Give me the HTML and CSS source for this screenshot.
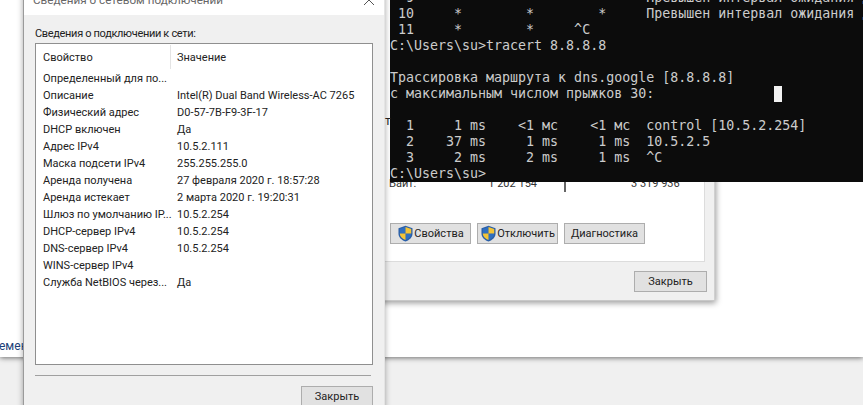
FILE: index.html
```html
<!DOCTYPE html>
<html lang="ru">
<head>
<meta charset="utf-8">
<title>Сведения о сетевом подключении</title>
<link rel="stylesheet" href="styles.css">
</head>
<body>
<div class="desktop">
  <div class="main-window"><span class="main-link">емен</span></div>

  <section class="status-dialog">
    <span class="stray">т</span>
    <div class="status-panel">
      <div class="stat-row">
        <span class="stat-label">Байт:</span>
        <span class="stat-sent">1 202 154</span>
        <span class="stat-line"></span>
        <span class="stat-recv">3 319 936</span>
      </div>
      <div class="status-actions">
        <button class="btn btn-action"><svg class="shield" viewBox="0 0 16 16"><path d="M8 .6 14.600 3v5c0 3.600-2.800 6.200-6.600 7.500C4.200 14.200 1.400 11.600 1.400 8V3z" fill="#2a5fa8"/><path d="M8 1.800V8H2.600V3.700zM8 8h5.400c-.1 2.900-2.400 5-5.400 6.200z" fill="#2f6fc0"/><path d="M8 1.800 13.400 3.700V8H8zM8 8v6.200C5 13 2.700 10.900 2.600 8z" fill="#f3c437"/></svg><span>Свойства</span></button>
        <button class="btn btn-action"><svg class="shield" viewBox="0 0 16 16"><path d="M8 .6 14.600 3v5c0 3.600-2.800 6.200-6.600 7.500C4.200 14.200 1.400 11.600 1.400 8V3z" fill="#2a5fa8"/><path d="M8 1.800V8H2.600V3.700zM8 8h5.400c-.1 2.900-2.400 5-5.400 6.200z" fill="#2f6fc0"/><path d="M8 1.800 13.400 3.700V8H8zM8 8v6.200C5 13 2.700 10.900 2.600 8z" fill="#f3c437"/></svg><span>Отключить</span></button>
        <button class="btn btn-action btn-plain">Диагностика</button>
      </div>
    </div>
    <div class="status-footer"><button class="btn btn-close">Закрыть</button></div>
  </section>

  <section class="details-dialog">
    <header class="titlebar">
      <span class="title-text">Сведения о сетевом подключении</span>
      <svg class="close-x" viewBox="0 0 12 12"><path d="M1 1 11 11M11 1 1 11" stroke="#555" stroke-width="1" fill="none"/></svg>
    </header>
    <div class="details-body">
      <div class="list-caption">Сведения о подключении к сети:</div>
      <div class="list">
        <div class="list-head"><span class="head-prop">Свойство</span><span class="head-val">Значение</span></div>
        <div class="row"><span>Определенный для по...</span><span></span></div>
        <div class="row"><span>Описание</span><span>Intel(R) Dual Band Wireless-AC 7265</span></div>
        <div class="row"><span>Физический адрес</span><span>D0-57-7B-F9-3F-17</span></div>
        <div class="row"><span>DHCP включен</span><span>Да</span></div>
        <div class="row"><span>Адрес IPv4</span><span>10.5.2.111</span></div>
        <div class="row"><span>Маска подсети IPv4</span><span>255.255.255.0</span></div>
        <div class="row"><span>Аренда получена</span><span>27 февраля 2020 г. 18:57:28</span></div>
        <div class="row"><span>Аренда истекает</span><span>2 марта 2020 г. 19:20:31</span></div>
        <div class="row"><span>Шлюз по умолчанию IP...</span><span>10.5.2.254</span></div>
        <div class="row"><span>DHCP-сервер IPv4</span><span>10.5.2.254</span></div>
        <div class="row"><span>DNS-сервер IPv4</span><span>10.5.2.254</span></div>
        <div class="row"><span>WINS-сервер IPv4</span><span></span></div>
        <div class="row"><span>Служба NetBIOS через...</span><span>Да</span></div>
      </div>
      <div class="separator"></div>
      <div class="details-footer"><button class="btn btn-close">Закрыть</button></div>
    </div>
  </section>

  <section class="console">
<pre class="console-text">  9     *        *        *     Превышен интервал ожидания для запроса.
 10     *        *        *     Превышен интервал ожидания для запроса.
 11     *        *     ^C
C:\Users\su&gt;tracert 8.8.8.8

Трассировка маршрута к dns.google [8.8.8.8]
с максимальным числом прыжков 30:

  1     1 ms    &lt;1 мс    &lt;1 мс  control [10.5.2.254]
  2    37 ms     1 ms     1 ms  10.5.2.5
  3     2 ms     2 ms     1 ms  ^C
C:\Users\su&gt;</pre>
    <span class="cursor"></span>
  </section>
</div>
</body>
</html>
```
FILE: styles.css
```css
* { box-sizing: border-box; }

html, body {
  margin: 0;
  padding: 0;
  height: 100%;
  overflow: hidden;
}

body {
  font-family: Roboto, "Open Sans", sans-serif;
  font-size: 11px;
  color: #222;
}

.desktop {
  position: relative;
  width: 863px;
  height: 405px;
  overflow: hidden;
  background: #f0f0f0;
}

/* Back window */
.main-window {
  position: absolute;
  left: 0;
  top: 0;
  width: 863px;
  height: 357px;
  background: #fff;
  box-shadow: 0 1px 5px rgba(0, 0, 0, .55);
}

.main-link {
  position: absolute;
  left: -1px;
  top: 339px;
  font-size: 12px;
  color: #1c3f78;
}

/* Connection status dialog */
.status-dialog {
  position: absolute;
  left: 340px;
  top: 0;
  width: 375px;
  height: 301px;
  display: flex;
  flex-direction: column;
  background: #f0f0f0;
  border-right: 1px solid #d0d0d0;
  border-bottom: 1px solid #c8c8c8;
  box-shadow: 1px 2px 6px rgba(0, 0, 0, .4);
}

.stray {
  position: absolute;
  left: 45px;
  top: 114px;
  z-index: 1;
  font-size: 12px;
}

.status-panel {
  height: 262px;
  margin-right: 9px;
  padding: 0 0 17px 50px;
  display: flex;
  flex-direction: column;
  justify-content: flex-end;
  background: #fff;
  border-right: 1px solid #dcdcdc;
  border-bottom: 1px solid #dcdcdc;
}

.stat-row {
  display: grid;
  grid-template-columns: 147px 28px 1px 64px 46px;
  height: 18px;
  margin-bottom: 31px;
  align-items: center;
  color: #333;
}

.stat-sent { grid-column: 1; text-align: right; white-space: nowrap; }
.stat-line { grid-column: 3; align-self: stretch; width: 2px; margin-left: -1px; background: #666; }
.stat-recv { grid-column: 5 / 6; margin-left: 1px; text-align: right; white-space: nowrap; }
.stat-label { position: absolute; left: 49px; }

.status-actions {
  display: flex;
  gap: 6px;
}

.status-footer {
  flex: 1;
  display: flex;
  justify-content: flex-end;
  align-items: flex-start;
  padding: 9px 7px 0 0;
}

.btn {
  font-family: inherit;
  font-size: 11px;
  color: #222;
  background: #e1e1e1;
  border: 1px solid #adadad;
  padding: 0;
  display: flex;
  align-items: center;
  justify-content: center;
}

.btn-action {
  width: 81px;
  height: 21px;
  gap: 0;
}

.shield {
  width: 17px;
  height: 17px;
  flex: none;
}

.btn-close {
  width: 73px;
  height: 21px;
}

/* Details dialog */
.details-dialog {
  position: absolute;
  left: 23px;
  top: -20px;
  width: 362px;
  height: 440px;
  background: #f0f0f0;
  border-left: 1px solid #9a9a9a;
  border-right: 1px solid #e4e4e4;
  box-shadow: 0 0 6px rgba(0, 0, 0, .35);
}

.titlebar {
  height: 35px;
  padding: 5px 9px 0 9px;
  display: flex;
  align-items: center;
  justify-content: space-between;
  background: #fff;
}

.title-text {
  font-size: 11.7px;
  color: #666;
}

.close-x {
  width: 12px;
  height: 12px;
}

.details-body {
  padding: 10px 11px 0 11px;
}

.list-caption {
  height: 18px;
  line-height: 17px;
  letter-spacing: -.33px;
}

.list {
  height: 322px;
  background: #fff;
  border: 1px solid #8f8f8f;
}

.list-head {
  display: grid;
  grid-template-columns: 134px 1fr;
  height: 26px;
  padding-left: 7px;
  align-items: center;
}

.head-val {
  position: relative;
}

.head-val::before {
  content: "";
  position: absolute;
  left: -7px;
  top: -6px;
  bottom: -5px;
  width: 1px;
  background: #e4e4e4;
}

.row {
  display: grid;
  grid-template-columns: 134px 1fr;
  height: 17px;
  line-height: 17px;
  padding-left: 7px;
  white-space: nowrap;
}

.separator {
  height: 1px;
  margin: 10px 2px 0 0;
  background: #a0a0a0;
}

.details-footer {
  display: flex;
  justify-content: flex-end;
  padding-top: 10px;
}

.details-footer .btn-close {
  width: 72px;
}

/* Console */
.console {
  position: absolute;
  left: 390px;
  top: 0;
  width: 473px;
  height: 182px;
  overflow: hidden;
  background: #0c0c0c;
}

.console-text {
  margin: -10px 0 0 0;
  font-family: "DejaVu Sans Mono", "Liberation Mono", monospace;
  font-size: 13.3px;
  line-height: 16px;
  color: #cccccc;
  white-space: pre;
}

.cursor {
  position: absolute;
  left: 384px;
  top: 86px;
  width: 8px;
  height: 16px;
  background: #f2f2f2;
}
```
